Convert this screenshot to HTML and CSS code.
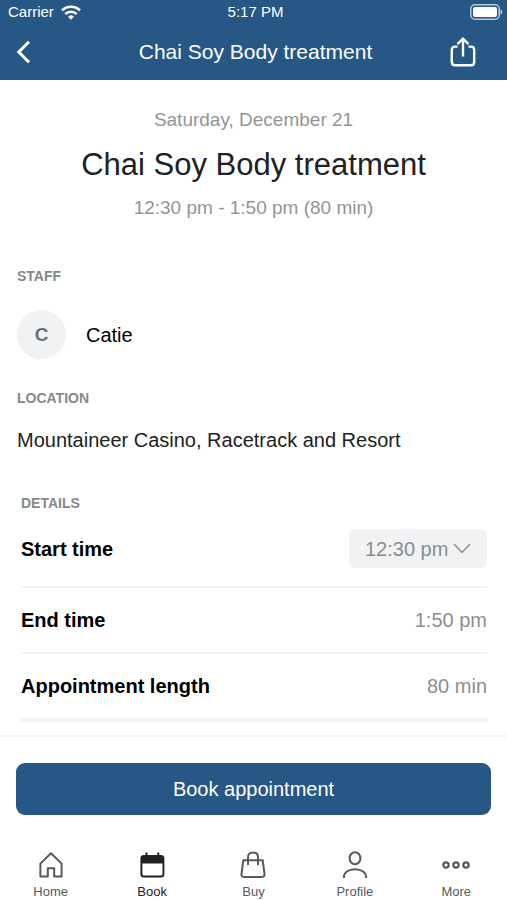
FILE: index.html
```html
<!DOCTYPE html>
<html lang="en">
<head>
<meta charset="utf-8">
<meta name="viewport" content="width=device-width, initial-scale=1">
<title>Chai Soy Body treatment</title>
<link rel="stylesheet" href="styles.css">
</head>
<body>
<header class="top">
  <div class="status">
    <div class="carrier">
      <span>Carrier</span>
      <svg width="20" height="15" viewBox="0 0 20 15" fill="none" stroke="currentColor" stroke-width="2.5" aria-hidden="true">
        <path d="M1 5.4a12.8 12.8 0 0 1 18 0M4.300 9a8.100 8.100 0 0 1 11.400 0"/>
        <path d="M10 14.800l-2.900-3.100a4.200 4.200 0 0 1 5.800 0z" fill="currentColor" stroke="none"/>
      </svg>
    </div>
    <span>5:17 PM</span>
    <svg class="battery" width="33" height="16" viewBox="0 0 33 16" aria-hidden="true">
      <rect x=".8" y=".8" width="28.400" height="14.400" rx="4" fill="none" stroke="#b5c8da" stroke-width="1.500"/>
      <rect x="3" y="3" width="24" height="10" rx="2" fill="#fff"/>
      <path d="M30.500 5.200c2.400 1 2.400 4.600 0 5.600z" fill="#b5c8da"/>
    </svg>
  </div>
  <div class="nav">
    <button class="icon-button" type="button" aria-label="Back">
      <svg width="16" height="24" viewBox="0 0 16 24" fill="none" stroke="currentColor" stroke-width="3" aria-hidden="true"><path d="M13 1.800 2.800 12 13 22.200"/></svg>
    </button>
    <span class="nav-title">Chai Soy Body treatment</span>
    <button class="icon-button share" type="button" aria-label="Share">
      <svg width="26" height="30" viewBox="0 0 26 30" fill="none" stroke="currentColor" stroke-width="2.400" aria-hidden="true">
        <path d="M7.500 9.600H5.100Q1.800 9.600 1.800 12.900V25Q1.800 28.300 5.100 28.300H20.900Q24.200 28.300 24.200 25V12.900Q24.200 9.600 20.900 9.600H18.500M13 19.500V2M7.500 7.200 13 1.700l5.500 5.500"/>
      </svg>
    </button>
  </div>
</header>

<main class="content">
  <section class="summary">
    <p>Saturday, December 21</p>
    <h1>Chai Soy Body treatment</h1>
    <p>12:30 pm - 1:50 pm (80 min)</p>
  </section>

  <section class="staff">
    <h2>Staff</h2>
    <div class="person"><span class="avatar">C</span><span>Catie</span></div>
  </section>

  <section class="location">
    <h2>Location</h2>
    <p>Mountaineer Casino, Racetrack and Resort</p>
  </section>

  <section class="details">
    <h2>Details</h2>
    <div class="row row-start">
      <label for="start">Start time</label>
      <div class="picker">
        <select id="start"><option>12:30 pm</option></select>
        <svg width="18" height="11" viewBox="0 0 18 11" fill="none" stroke="currentColor" stroke-width="1.500" aria-hidden="true"><path d="M1 1l8 8.500L17 1"/></svg>
      </div>
    </div>
    <div class="row"><span class="name">End time</span><span class="value">1:50 pm</span></div>
    <div class="row"><span class="name">Appointment length</span><span class="value">80 min</span></div>
  </section>
</main>

<footer class="bottom">
  <div class="action"><button class="book" type="button">Book appointment</button></div>
  <nav class="tabs">
    <a href="#home">
      <svg width="28" height="28" viewBox="0 0 28 28" fill="none" stroke="currentColor" stroke-width="2" stroke-linejoin="round" aria-hidden="true"><path d="M14 2.300 3.400 12.600V25.500H10.800V17.200H17.200V25.500H24.600V12.600z"/></svg>
      Home
    </a>
    <a href="#book" class="active" aria-current="page">
      <svg width="28" height="28" viewBox="0 0 28 28" aria-hidden="true">
        <path fill="currentColor" fill-rule="evenodd" d="M7.500 1.600h2V4h9.800V1.600h2V4H23q3.400 0 3.400 3.400V23q0 3.500-3.400 3.500H6Q2.400 26.500 2.400 23V7.400Q2.400 4 6 4h1.500zM4.400 12.600V23q0 1.600 1.600 1.600h17q1.500 0 1.500-1.600V12.600z"/>
      </svg>
      Book
    </a>
    <a href="#buy">
      <svg width="28" height="28" viewBox="0 0 28 28" fill="none" stroke="currentColor" stroke-width="2" stroke-linejoin="round" aria-hidden="true"><path d="M4.300 9.200H23.700L25.500 23Q25.800 25.900 23 25.900H5Q2.200 25.900 2.500 23zM9 14V6.500C9 3.500 11 1.500 14 1.500S19 3.500 19 6.500V14"/></svg>
      Buy
    </a>
    <a href="#profile">
      <svg width="28" height="28" viewBox="0 0 28 28" fill="none" stroke="currentColor" stroke-width="2.100" aria-hidden="true"><ellipse cx="14" cy="7.200" rx="5.400" ry="6"/><path d="M2.800 26.900C2.800 21.500 7.200 18.200 14 18.200s11.200 3.300 11.200 8.700"/></svg>
      Profile
    </a>
    <a href="#more">
      <svg width="28" height="28" viewBox="0 0 28 28" fill="none" stroke="currentColor" stroke-width="2.200" aria-hidden="true"><circle cx="4" cy="14" r="2.700"/><circle cx="14" cy="14" r="2.700"/><circle cx="24" cy="14" r="2.700"/></svg>
      More
    </a>
  </nav>
</footer>
</body>
</html>
```
FILE: styles.css
```css
* { box-sizing: border-box; }

body {
  margin: 0;
  min-height: 100vh;
  display: flex;
  flex-direction: column;
  background: #fff;
  color: #202123;
  font: 20px/24px "Liberation Sans", Arial, sans-serif;
}

h1, h2, p { margin: 0; font-weight: 400; }
button, select { font: inherit; border: 0; }
svg { display: block; flex: none; }

.top { background: #265785; color: #fff; }

.status {
  display: grid;
  grid-template-columns: 1fr auto 1fr;
  align-items: center;
  height: 24px;
  padding: 0 4px 0 8px;
  font-size: 15px;
}
.carrier { display: flex; align-items: center; gap: 7px; }
.battery { justify-self: end; }

.nav {
  display: grid;
  grid-template-columns: 60px 1fr 62px;
  align-items: center;
  height: 56px;
  padding-left: 6px;
}
.nav-title { text-align: center; font-size: 21px; }
.icon-button {
  display: flex;
  width: 36px;
  padding: 0 10px;
  background: none;
  color: inherit;
}
.share { padding: 0; justify-content: center; }

.content { padding: 28px 17px 12px; }

.summary { text-align: center; color: #949494; font-size: 19px; }
.summary h1 { margin: 15px 0 13px; color: #202123; font-size: 31px; line-height: 36px; }

h2 {
  color: #87888a;
  font-size: 14px;
  font-weight: 700;
  line-height: 16px;
  text-transform: uppercase;
}

.staff { margin-top: 48px; }
.person { display: flex; align-items: center; gap: 20px; margin-top: 26px; color: #000; }
.avatar {
  display: grid;
  place-items: center;
  width: 49px;
  height: 49px;
  border-radius: 50%;
  background: #f0f2f4;
  color: #6c7074;
  font-size: 19px;
  font-weight: 700;
}

.location { margin-top: 31px; }
.location p { margin-top: 22px; }

.details { margin: 43px 3px 0 4px; }
.row {
  display: flex;
  align-items: center;
  justify-content: space-between;
  height: 66px;
  border-bottom: 2px solid #f5f5f5;
}
.row:last-child { height: 68px; border-bottom-width: 4px; }
.row-start { height: 77px; }
.row label, .name { color: #000; font-weight: 700; }
.value { color: #8e8e8e; }

.picker { display: grid; align-items: center; color: #8b8d8f; }
.picker > * { grid-area: 1 / 1; }
.picker svg { justify-self: end; margin-right: 16px; pointer-events: none; }
select {
  appearance: none;
  height: 39px;
  padding: 0 38px 0 16px;
  border-radius: 6px;
  background: #f0f2f4;
  color: inherit;
}

.bottom { margin-top: auto; border-top: 2px solid #f3f3f3; }
.action { padding: 26px 16px; }
.book {
  display: block;
  width: 100%;
  height: 52px;
  border-radius: 9px;
  background: #265785;
  color: #fff;
}

.tabs { display: grid; grid-template-columns: repeat(5, 1fr); padding-top: 10px; }
.tabs a {
  display: flex;
  flex-direction: column;
  align-items: center;
  gap: 5px;
  color: #58595b;
  font-size: 13px;
  line-height: 16px;
  text-decoration: none;
}
.tabs .active { color: #202123; }
```
